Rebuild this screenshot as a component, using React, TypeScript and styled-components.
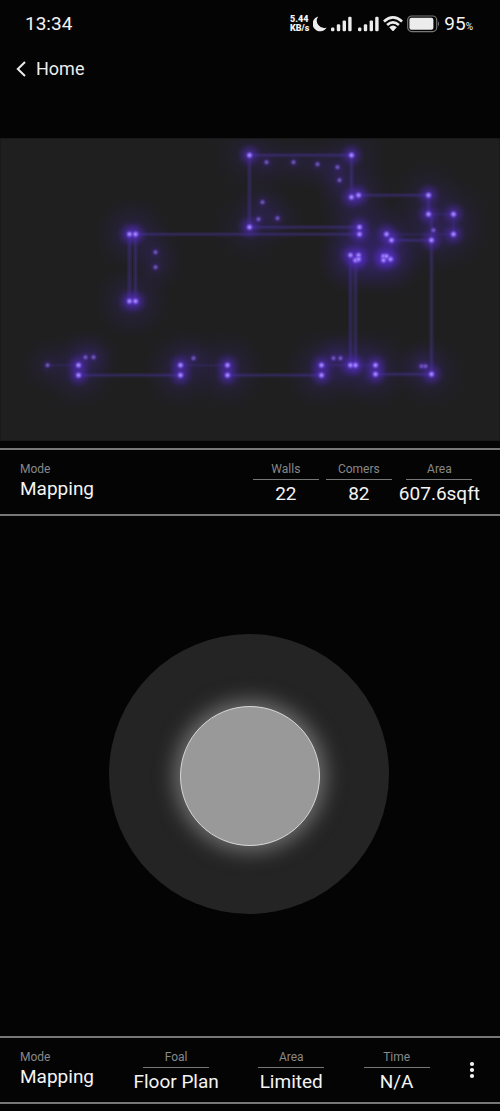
import React from "react";
import styled, { createGlobalStyle } from "styled-components";

const GlobalStyle = createGlobalStyle`
  * { box-sizing: border-box; }
  body {
    margin: 0;
    background: #040405;
    color: #f4f4f4;
    font-family: Roboto, "Liberation Sans", sans-serif;
  }
`;

const Screen = styled.div`
  display: flex;
  flex-direction: column;
  min-height: 100vh;
`;

const StatusBar = styled.header`
  display: flex;
  align-items: center;
  justify-content: space-between;
  height: 47px;
  padding: 0 27px 0 25px;
`;

const Clock = styled.time`
  font-size: 19px;
  line-height: 24px;
`;

const StatusIcons = styled.div`
  display: flex;
  align-items: center;
  gap: 4px;

  svg { display: block; fill: #ececec; }
`;

const Speed = styled.span`
  font-size: 9px;
  line-height: 9px;
  font-weight: 900;
`;

const Signals = styled.span`
  display: flex;
  gap: 6px;
`;

const Charge = styled.span`
  font-size: 19px;
  line-height: 24px;

  small { font-size: 10px; line-height: 10px; }
`;

const Nav = styled.nav`
  display: flex;
  align-items: center;
  height: 43px;
  margin-bottom: 48px;
  padding: 0 16px;
`;

const BackLink = styled.a`
  display: flex;
  align-items: center;
  gap: 10px;
  color: #ececec;
  font-size: 18px;
  line-height: 24px;
  text-decoration: none;
`;

const Plan = styled.svg`
  display: block;
  width: 100%;
  margin-bottom: 7px;
  background: #1f1f20;
  border: 1px solid #19191a;
`;

const InfoBar = styled.section<{ $spread?: boolean }>`
  display: flex;
  align-items: flex-start;
  justify-content: ${(p) => (p.$spread ? "space-between" : "flex-start")};
  gap: 7px;
  height: 68px;
  padding: 12px ${(p) => (p.$spread ? "25px" : "20px")} 12px 20px;
  border: solid #777;
  border-width: 2px 0;
`;

const Item = styled.div<{ $ruled?: boolean; $grow?: boolean }>`
  display: flex;
  flex-direction: column;
  align-items: ${(p) => (p.$ruled ? "center" : "flex-start")};
  min-width: ${(p) => (p.$ruled ? "66px" : "0")};
  margin-right: ${(p) => (p.$grow ? "auto" : "0")};
`;

const Label = styled.span<{ $ruled?: boolean }>`
  width: ${(p) => (p.$ruled ? "66px" : "auto")};
  margin-bottom: ${(p) => (p.$ruled ? "2px" : "0")};
  padding-bottom: ${(p) => (p.$ruled ? "2px" : "0")};
  border-bottom: ${(p) => (p.$ruled ? "1px solid #777" : "0")};
  color: #888;
  font-size: 12px;
  line-height: 15px;
  text-align: center;
`;

const Value = styled.span`
  font-size: 19px;
  line-height: 24px;
  white-space: nowrap;
`;

const Stage = styled.main`
  display: grid;
  flex: 1;
  place-items: center;
  padding: 20px 22px 24px 20px;
`;

const Pad = styled.div`
  display: grid;
  place-items: center;
  width: 280px;
  height: 280px;
  padding: 4px 0 0 2px;
  border-radius: 50%;
  background: #242424;
`;

const Thumb = styled.button`
  width: 140px;
  height: 140px;
  padding: 0;
  border: 1px solid #d8d8d8;
  border-radius: 50%;
  background: #999;
  box-shadow: 0 0 20px 6px rgba(170, 170, 170, 0.55);
`;

const MoreButton = styled.button`
  align-self: center;
  padding: 0;
  border: 0;
  background: none;
  color: #f4f4f4;

  svg { display: block; fill: currentColor; }
`;

const BottomDock = styled.footer`
  padding-bottom: 7px;
`;

type Point = [number, number];

const corners: Point[] = [
  [249, 17], [351, 17], [351, 59], [358, 57], [249, 89], [359, 89], [359, 96],
  [428, 57], [428, 76], [453, 76], [453, 96], [431, 102], [386, 96], [391, 102],
  [350, 117], [358, 117], [355, 122], [358, 121], [383, 118], [386, 118],
  [383, 122], [390, 121], [129, 96], [135, 96], [129, 163], [135, 163],
  [78, 227], [78, 237], [180, 227], [180, 237], [227, 227], [227, 237],
  [321, 227], [321, 237], [350, 227], [355, 227], [375, 227], [375, 236],
  [431, 236],
];

const marks: Point[] = [
  [266, 24], [293, 24], [317, 26], [337, 29], [339, 42], [262, 64], [258, 81],
  [277, 80], [433, 92], [155, 114], [155, 129], [47, 227], [85, 219], [93, 219],
  [193, 220], [333, 220], [340, 220], [421, 228], [425, 228],
];

const walls = [
  "M249 17H351V59", "M249 17V89", "M249 89H359", "M135 96H359",
  "M129 96V163", "M135 96V163", "M358 57H428V76", "M431 76V236",
  "M391 102H431", "M350 120V227", "M355 120V227", "M78 237H180",
  "M227 237H321", "M375 236H431",
];

const faintWalls = [
  "M428 76H453V96", "M386 96H453", "M386 96L391 102V121", "M180 227H227",
  "M47 227H78", "M321 227H375",
];

function FloorPlan() {
  return (
    <Plan viewBox="0 0 498 301" role="img" aria-label="Floor plan">
      <defs>
        <radialGradient id="haze">
          <stop offset="0" stopColor="#4a2a98" stopOpacity="0.22" />
          <stop offset="0.45" stopColor="#38257a" stopOpacity="0.11" />
          <stop offset="1" stopColor="#2c2050" stopOpacity="0" />
        </radialGradient>
        <radialGradient id="glow">
          <stop offset="0" stopColor="#6a40ec" stopOpacity="0.75" />
          <stop offset="0.4" stopColor="#4f2cb4" stopOpacity="0.42" />
          <stop offset="1" stopColor="#3c2090" stopOpacity="0" />
        </radialGradient>
        <radialGradient id="core">
          <stop offset="0" stopColor="#b09aff" />
          <stop offset="0.45" stopColor="#8c6cea" stopOpacity="0.75" />
          <stop offset="1" stopColor="#6a3cf0" stopOpacity="0" />
        </radialGradient>
      </defs>
      <g transform="translate(-0.5 -0.8)">
        {corners.map(([x, y], i) => <circle key={i} cx={x} cy={y} r="38" fill="url(#haze)" />)}
        {marks.map(([x, y], i) => <circle key={i} cx={x} cy={y} r="28" fill="url(#haze)" />)}
        <g fill="none" stroke="#4c35a0">
          {walls.map((d) => (
            <g key={d}>
              <path d={d} strokeWidth="5" opacity="0.16" />
              <path d={d} strokeWidth="2" opacity="0.32" />
            </g>
          ))}
          {faintWalls.map((d) => <path key={d} d={d} strokeWidth="3" opacity="0.16" />)}
        </g>
        {corners.map(([x, y], i) => <circle key={i} cx={x} cy={y} r="13" fill="url(#glow)" />)}
        {corners.map(([x, y], i) => <circle key={i} cx={x} cy={y} r="4" fill="url(#core)" />)}
        {marks.map(([x, y], i) => (
          <g key={i}>
            <circle cx={x} cy={y} r="7" fill="url(#glow)" opacity="0.35" />
            <circle cx={x} cy={y} r="3.5" fill="url(#core)" opacity="0.5" />
          </g>
        ))}
      </g>
    </Plan>
  );
}

function SignalIcon() {
  return (
    <svg width="21" height="16" viewBox="0 0 21 16" aria-hidden="true">
      <rect x="0" y="11.5" width="3.4" height="3.8" rx="1.2" />
      <rect x="5.8" y="8.2" width="3.4" height="7.1" rx="1.2" />
      <rect x="11.6" y="4.4" width="3.4" height="10.9" rx="1.2" />
      <rect x="17.2" y="0.8" width="3.4" height="14.5" rx="1.2" />
    </svg>
  );
}

function Stat({ label, value, ruled, grow }: { label: string; value: string; ruled?: boolean; grow?: boolean }) {
  return (
    <Item $ruled={ruled} $grow={grow}>
      <Label $ruled={ruled}>{label}</Label>
      <Value>{value}</Value>
    </Item>
  );
}

export default function App() {
  return (
    <>
      <GlobalStyle />
      <Screen>
        <StatusBar>
          <Clock>13:34</Clock>
          <StatusIcons>
            <Speed>5.44<br />KB/s</Speed>
            <svg width="14" height="16" viewBox="0 0 14 16" aria-hidden="true">
              <path d="M5.2 0.4A7.6 7.6 0 1 0 13.7 11.6A7.4 7.4 0 0 1 5.2 0.4Z" />
            </svg>
            <Signals>
              <SignalIcon />
              <SignalIcon />
            </Signals>
            <svg width="20" height="16" viewBox="0 0 20 16" aria-hidden="true">
              <g fill="none" stroke="#ececec" strokeWidth="2.6">
                <path d="M0.9 5.4Q10 -2.6 19.1 5.4" />
                <path d="M4.1 9Q10 3.8 15.9 9" />
              </g>
              <path d="M6.2 11.2Q10 8 13.8 11.2L10.7 14.7Q10 15.3 9.3 14.7Z" />
            </svg>
            <svg width="33" height="18" viewBox="0 0 33 18" aria-hidden="true">
              <rect x="0.7" y="1" width="29" height="15.6" rx="4" fill="none" stroke="#777" strokeWidth="1.2" />
              <rect x="2.4" y="2.8" width="24" height="12" rx="2" />
              <path d="M31 6Q33 8.8 31 11.6Z" fill="#777" />
            </svg>
            <Charge>95<small>%</small></Charge>
          </StatusIcons>
        </StatusBar>
        <Nav>
          <BackLink href="#home">
            <svg width="10" height="16" viewBox="0 0 10 16" fill="none" stroke="currentColor" strokeWidth="2" aria-hidden="true">
              <path d="M9 1L1.8 8L9 15" />
            </svg>
            Home
          </BackLink>
        </Nav>
        <FloorPlan />
        <InfoBar>
          <Stat label="Mode" value="Mapping" grow />
          <Stat label="Walls" value="22" ruled />
          <Stat label="Comers" value="82" ruled />
          <Stat label="Area" value="607.6sqft" ruled />
        </InfoBar>
        <Stage>
          <Pad>
            <Thumb aria-label="Joystick" />
          </Pad>
        </Stage>
        <BottomDock>
          <InfoBar $spread>
            <Stat label="Mode" value="Mapping" />
            <Stat label="Foal" value="Floor Plan" ruled />
            <Stat label="Area" value="Limited" ruled />
            <Stat label="Time" value="N/A" ruled />
            <MoreButton aria-label="More options">
              <svg width="6" height="18" viewBox="0 0 6 18" aria-hidden="true">
                <circle cx="3" cy="3" r="2.1" />
                <circle cx="3" cy="9" r="2.1" />
                <circle cx="3" cy="15" r="2.1" />
              </svg>
            </MoreButton>
          </InfoBar>
        </BottomDock>
      </Screen>
    </>
  );
}
